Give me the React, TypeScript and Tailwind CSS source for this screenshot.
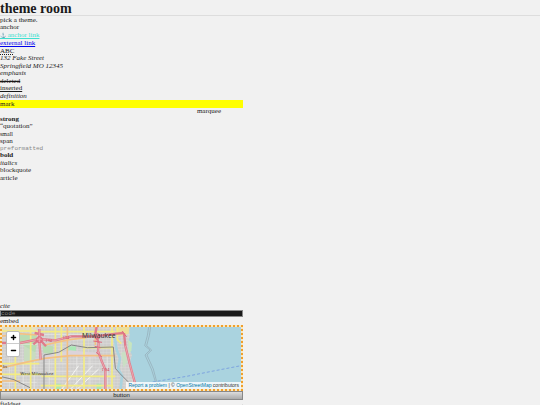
import React from 'react';
import { Plus, Minus } from 'lucide-react';

function StreetMap() {
  return (
    <svg
      viewBox="6 6 717 186"
      preserveAspectRatio="xMinYMid slice"
      className="block h-full w-full"
      role="img"
      aria-label="Map of Milwaukee"
    >
      <defs>
        <pattern id="blocks" width="11" height="9" patternUnits="userSpaceOnUse">
          <rect width="11" height="9" fill="#cfcecd" />
          <path d="M0 0H11M0 0V9" stroke="#e0dfdf" strokeWidth="2" />
        </pattern>
      </defs>
      <rect width="729" height="198" fill="url(#blocks)" />

      {/* parks and industry */}
      <path d="M58 30H110V60L106 82L78 78L70 60H58Z" fill="#b9dcb3" />
      <path d="M72 62L108 84L104 112L72 108Z" fill="#c8dcc0" />
      <path d="M128 60L160 64L158 88L130 84Z" fill="#b9dcb3" />
      <path d="M205 64H228V84H205Z" fill="#a9e8b5" />
      <path d="M166 176H182V192H166ZM290 176H304V192H290Z" fill="#a9e8b5" />
      <path d="M128 94L210 76L290 84L288 98L196 92L130 108Z" fill="#dcd3da" />
      <path d="M0 6H110V22H0Z" fill="#e5dfc4" />

      {/* lake and rivers */}
      <path
        d="M388 0H729V198H412L406 166L400 140L390 112L396 90L386 70L384 50L390 30L388 20Z"
        fill="#aad3df"
      />
      <path
        d="M344 40L350 74L360 100L354 132L366 152L362 192"
        fill="none"
        stroke="#aad3df"
        strokeWidth="8"
      />
      <path d="M348 8L388 6L386 26L374 30L352 34Z" fill="#ecdf98" />
      <path d="M384 44L396 54L394 78L386 84Z" fill="#c7e5bf" />
      <path d="M364 84L376 78L382 112L370 128Z" fill="#c9dfc4" />

      {/* local roads */}
      <g fill="none" stroke="#e9e9e6" strokeWidth="2">
        <path d="M28 94V192M70 106V192M104 106V192M148 102V192M230 92V192M270 96V192M322 92V192" />
        <path d="M0 58H112M130 116H344M150 140H292M146 162H300M10 172H110M128 28H340M208 42H284" />
      </g>
      <g fill="none" stroke="#f6f6f4" strokeWidth="3">
        <path d="M186 192L236 122M212 192L278 122M232 192L296 132" />
      </g>
      <g fill="none" stroke="#f3ec84" strokeWidth="5">
        <path d="M46 92V192M92 6V192M166 6V192M184 6V110M252 6V192M336 6V192" />
        <path d="M0 18H110M110 20H346M0 116H118M124 154H346M0 148H124M122 182H340" />
        <path d="M252 68H340M352 6V44L364 56" />
      </g>
      <g fill="none" stroke="#f3c184" strokeWidth="5">
        <path d="M0 130L76 112L134 100L210 92H346M202 6V192M0 168H60M134 60L208 44L260 38" />
        <path d="M0 34L56 26L110 30M286 6V60" />
      </g>

      {/* railways */}
      <g fill="none" stroke="#858585" strokeWidth="3">
        <path d="M0 154L42 164L90 188M132 192V90L176 82L214 60L262 68L340 66L346 130L360 146L384 170" />
        <path d="M384 170L396 188" strokeWidth="2" />
      </g>

      {/* motorways */}
      <g fill="none" stroke="#df7c8b" strokeWidth="7" strokeLinejoin="round">
        <path d="M0 54L60 54L118 42L166 46L214 34L284 34L350 26L372 24" />
        <path d="M118 12V44L122 104M100 58L118 42L138 64M104 24L132 30" />
        <path d="M290 6L286 26L296 54L294 78L304 106L316 134V192" />
        <path d="M372 24L376 62L388 112L406 178" />
      </g>
      <g fill="none" stroke="#f2b8be" strokeWidth="2">
        <path d="M60 54L118 42L166 46L214 34M118 12V44L122 104" />
        <path d="M296 54L294 78L304 106L316 134V192M376 62L388 112L406 178" />
      </g>
      <g fill="none" stroke="#e06b80" strokeWidth="3">
        <circle cx="118" cy="44" r="9" />
        <circle cx="292" cy="34" r="8" />
        <path d="M280 48L306 52M284 64L302 68M288 82L306 96M366 18L380 36" />
      </g>

      {/* offshore boundaries */}
      <path
        d="M446 6L442 32L434 62L450 75L435 90L454 132L466 170M452 6L448 32L440 62L455 75L441 90L460 132L470 170"
        fill="none"
        stroke="#93a9b4"
        strokeWidth="2"
      />
      <path d="M458 171L560 154L630 140L723 122" fill="none" stroke="#7da4df" strokeWidth="3" strokeDasharray="9 6" />

      <g className="font-['Noto_Sans',sans-serif]" fill="#333">
        <text x="246" y="38" fontSize="20">Milwaukee</text>
        <text x="61" y="149" fontSize="13">West Milwaukee</text>
        <text x="8" y="128" fontSize="13">lis</text>
        <text x="306" y="139" fontSize="13" fill="#cf4964">I 94</text>
        <text x="138" y="50" fontSize="10" fill="#cf4964">I 94</text>
        <text x="190" y="42" fontSize="10" fill="#cf4964">I 94</text>
      </g>
    </svg>
  );
}

function MapEmbed() {
  return (
    <div className="relative h-[66px] overflow-hidden border-2 border-dotted border-[#f0a02c] bg-[#fae8c2]">
      <StreetMap />
      <div className="absolute top-1 left-1 flex flex-col rounded-xs border border-[#bbb] bg-white">
        <button type="button" aria-label="Zoom in" className="flex size-3 items-center justify-center border-b border-[#ccc] text-black">
          <Plus className="size-[7px]" strokeWidth={5} />
        </button>
        <button type="button" aria-label="Zoom out" className="flex size-3 items-center justify-center text-black">
          <Minus className="size-[7px]" strokeWidth={5} />
        </button>
      </div>
      <p className="absolute right-0 bottom-0 bg-white/80 px-[2px] font-['Liberation_Sans',sans-serif] text-[5px] leading-[7px] whitespace-nowrap text-[#333]">
        <a href="#report" className="text-[#0078a8]">Report a problem</a> | ©{' '}
        <a href="#osm" className="text-[#0078a8]">OpenStreetMap</a> contributors
      </p>
    </div>
  );
}

export default function App() {
  return (
    <div className="h-screen overflow-hidden bg-[#f1f1f1] font-['Liberation_Serif',serif] text-[7px] leading-[8px] text-[#1a1a1a]">
      <header className="h-4 border-b border-[#ddd]">
        <h1 className="text-[14px] leading-[17px] font-bold">theme room</h1>
      </header>
      <main className="w-[45%]">
        <p>pick a theme.</p>
        <p className="leading-[7px]">anchor</p>
        <p>
          <a href="#anchor" className="text-[#40e0d0] underline">
            <span className="text-[5px] leading-none">⚓</span> anchor link
          </a>
        </p>
        <p>
          <a href="#external" className="text-[#0000ee] underline">external link</a>
        </p>
        <p>
          <abbr title="alphabet" className="underline decoration-dotted">ABC</abbr>
        </p>
        <address>
          <span className="block leading-[7px]">132 Fake Street</span>
          <span className="block">Springfield MO 12345</span>
        </address>
        <p className="leading-[7px]"><em>emphasis</em></p>
        <p><del>deleted</del></p>
        <p className="leading-[7px]"><ins>inserted</ins></p>
        <p><dfn className="italic">definition</dfn></p>
        <mark className="block bg-[#ffff00] text-[#1a1a1a]">mark</mark>
        <p className="pr-[22px] text-right leading-[7px]">marquee</p>
        <p><strong>strong</strong></p>
        <p className="leading-[7px]"><q>quotation</q></p>
        <p><small className="block text-[6px]">small</small></p>
        <p className="leading-[7px]"><span>span</span></p>
        <pre className="font-['Liberation_Mono',monospace] text-[6px] leading-[7px] text-[#888]">preformatted</pre>
        <p className="leading-[7px]"><b>bold</b></p>
        <p><i>italics</i></p>
        <blockquote className="leading-[7px]">blockquote</blockquote>
        <article className="h-[128px]">article</article>
        <p><cite>cite</cite></p>
        <code className="block border border-[#888] bg-[#1a1a1a] font-['Liberation_Mono',monospace] text-[6px] leading-[5px] text-[#888]">
          code
        </code>
        <p>embed</p>
        <MapEmbed />
        <button
          type="button"
          className="block w-full border border-[#888] bg-linear-to-b from-[#ddd] to-[#aaa] text-center font-['Liberation_Sans',sans-serif] text-[6px] leading-[7px]"
        >
          button
        </button>
        <fieldset className="border-r border-[#ddd]">
          <legend>fieldset</legend>
        </fieldset>
      </main>
    </div>
  );
}
